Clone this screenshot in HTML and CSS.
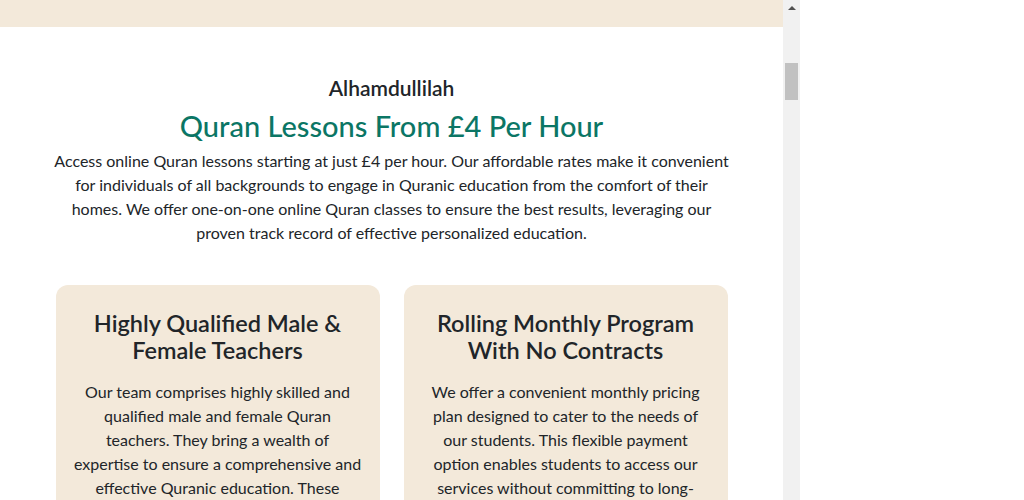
FILE: index.html
```html
<!DOCTYPE html>
<html lang="en">
<head>
<meta charset="utf-8">
<title>Quran Lessons</title>
<link rel="stylesheet" href="styles.css">
</head>
<body>
<div class="frame">
  <div class="page">
    <div class="topband"></div>
    <section class="intro">
      <h3 class="kicker">Alhamdullilah</h3>
      <h2 class="title">Quran Lessons From £4 Per Hour</h2>
      <p class="lead">Access online Quran lessons starting at just £4 per hour. Our affordable rates make it convenient for individuals of all backgrounds to engage in Quranic education from the comfort of their homes. We offer one-on-one online Quran classes to ensure the best results, leveraging our proven track record of effective personalized education.</p>
    </section>
    <section class="cards">
      <div class="card">
        <h4 class="card-title">Highly Qualified Male &amp; Female Teachers</h4>
        <p class="card-text">Our team comprises highly skilled and qualified male and female Quran teachers. They bring a wealth of expertise to ensure a comprehensive and effective Quranic education. These teachers are dedicated to guiding every student.</p>
      </div>
      <div class="card">
        <h4 class="card-title">Rolling Monthly Program With No Contracts</h4>
        <p class="card-text">We offer a convenient monthly pricing plan designed to cater to the needs of our students. This flexible payment option enables students to access our services without committing to long-term contracts.</p>
      </div>
    </section>
  </div>
  <div class="scrollbar">
    <div class="arrow"></div>
    <div class="thumb"></div>
  </div>
</div>
</body>
</html>
```
FILE: styles.css
```css
* { box-sizing: border-box; }
html, body { margin: 0; padding: 0; background: #fff; }
body { font-family: Lato, "Open Sans", sans-serif; color: #212529; }

.frame { display: flex; width: 800px; height: 500px; overflow: hidden; }
.page { width: 783px; flex: none; height: 500px; overflow: hidden; }
.topband { height: 27px; background: #f3e9da; }

.intro { text-align: center; padding: 48px 0 0; }
.kicker { margin: 0; font-size: 21px; line-height: 25px; font-weight: 600; color: #212529; }
.title { margin: 8px 0 0; font-size: 29px; line-height: 35px; font-weight: 500; color: #0b7665; }
.lead { margin: 6px auto 0; max-width: 684px; font-size: 16px; line-height: 24px; }

.cards { display: flex; gap: 24px; justify-content: center; padding-top: 40px; }
.card { width: 324px; background: #f3e9da; border-radius: 12px; padding: 25px 18px 0; text-align: center; height: 260px; }
.card-title { margin: 0; font-size: 23.5px; line-height: 27px; font-weight: 600; color: #212529; }
.card-text { margin: 16px 0 0; font-size: 16px; line-height: 24px; }

.scrollbar { width: 17px; flex: none; background: #f1f1f1; position: relative; }
.arrow { width: 0; height: 0; margin: 6px auto 0; border-left: 4px solid transparent; border-right: 4px solid transparent; border-bottom: 4px solid #505050; }
.thumb { position: absolute; left: 2px; top: 63px; width: 13px; height: 37px; background: #c1c1c1; }
```
